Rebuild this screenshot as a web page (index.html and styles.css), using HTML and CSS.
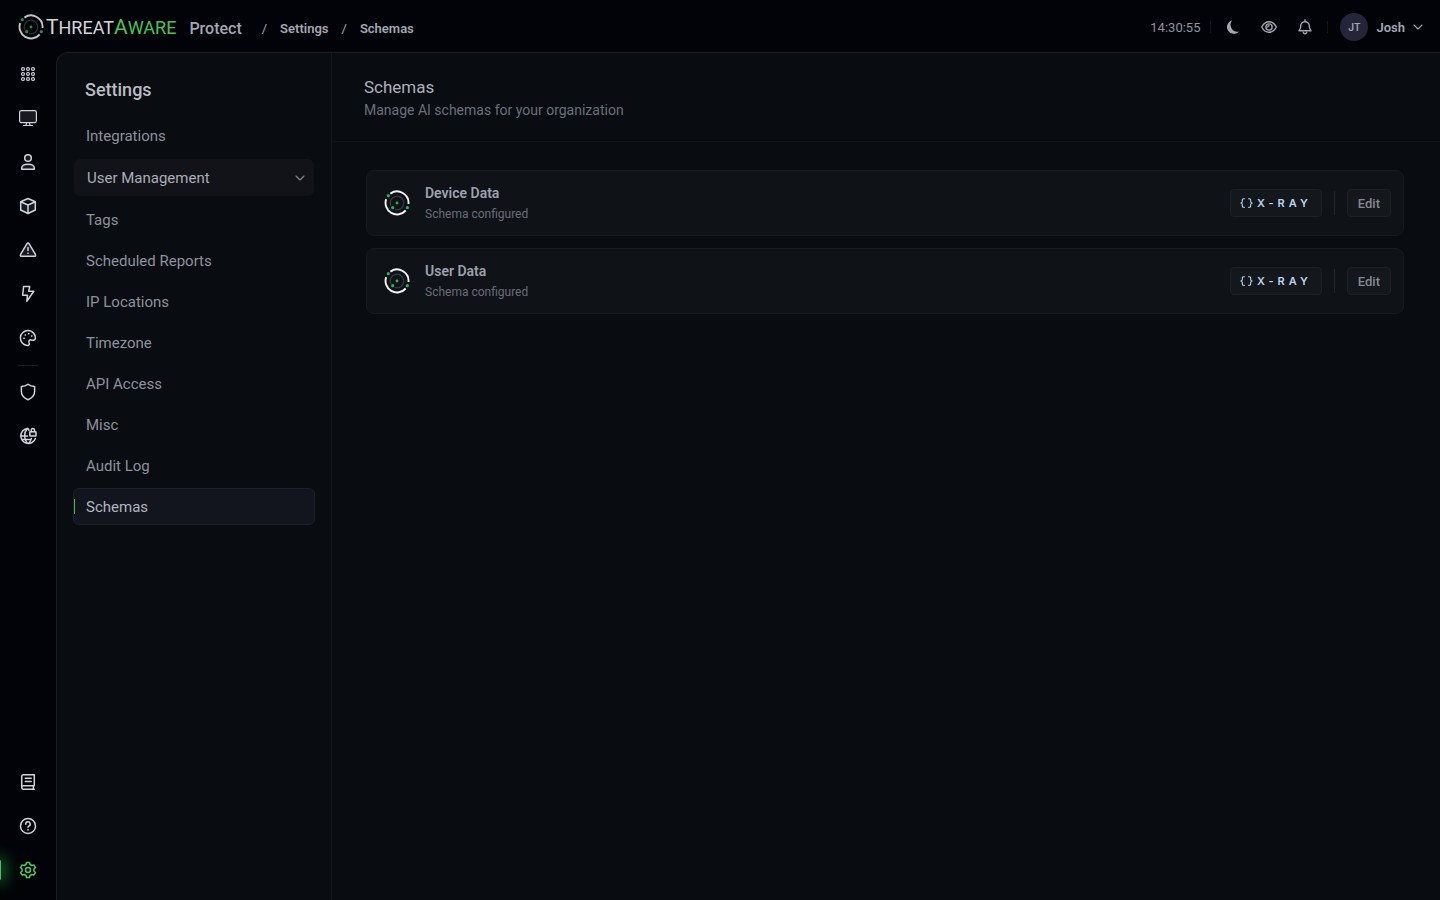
FILE: index.html
```html
<!DOCTYPE html>
<html lang="en">
<head>
<meta charset="utf-8">
<title>Schemas – ThreatAware</title>
<link rel="stylesheet" href="styles.css">
</head>
<body>
<svg class="sprite" aria-hidden="true">
  <symbol id="radar" viewBox="0 0 26 26">
    <g stroke-linecap="butt">
      <path class="ring" d="M6.400 3.600A11.500 11.500 0 0 1 24.500 14M21.700 20.500A11.500 11.500 0 0 1 2.200 9.100" stroke-width="1.900"/>
      <path class="orbit" d="M6.800 15.900A6.800 6.800 0 1 1 10.700 19.400" stroke-width="1.300"/>
    </g>
    <g class="blips"><circle cx="13" cy="13" r="1.400"/><circle cx="4.300" cy="5.700" r="1.600"/><circle cx="8.700" cy="17.700" r="1.600"/><circle cx="23.300" cy="17.700" r="1.600"/></g>
  </symbol>
</svg>
<div class="app">
  <header class="topbar">
    <a class="brand" href="#" aria-label="ThreatAware">
      <svg class="brand-mark" aria-hidden="true"><use href="#radar"/></svg>
      <span class="wordmark"><b>T</b>hreat<span class="accent"><b>A</b>ware</span></span>
    </a>
    <span class="product">Protect</span>
    <nav class="crumbs" aria-label="Breadcrumb">
      <span class="slash">/</span><a href="#">Settings</a><span class="slash">/</span><a href="#">Schemas</a>
    </nav>
    <div class="tools">
      <time class="clock">14:30:55</time>
      <span class="sep"></span>
      <button class="tool" aria-label="Dark mode"><svg viewBox="0 0 16 16"><path class="solid" d="M7.200 1.300A6.900 6.900 0 1 0 14.200 12.400A6.900 6.900 0 0 1 7.200 1.300Z"/></svg></button>
      <button class="tool" aria-label="Visibility"><svg viewBox="0 0 16 16"><path d="M.7 8C2.500 4.500 5 2.700 8 2.700S13.500 4.500 15.300 8C13.500 11.500 11 13.300 8 13.300S2.500 11.500.7 8Z"/><circle cx="8" cy="8" r="3.100"/><path d="M6.700 8A1.400 1.400 0 0 1 8 6.700"/></svg></button>
      <button class="tool" aria-label="Notifications"><svg viewBox="0 0 16 16"><path d="M8 .8V2M3.700 7A4.300 4.300 0 0 1 12.300 7C12.300 9.700 13.200 10.600 14 11.800H2C2.800 10.600 3.700 9.700 3.700 7ZM6.300 13.500A1.800 1.800 0 0 0 9.700 13.500"/></svg></button>
      <span class="sep"></span>
      <button class="account"><span class="avatar">JT</span>Josh<svg class="chev" viewBox="0 0 10 10"><path d="M1 3L5 7L9 3"/></svg></button>
    </div>
  </header>
  <nav class="rail" aria-label="Main">
    <a href="#" aria-label="Apps"><svg viewBox="0 0 18 18" class="dots"><circle cx="4" cy="4" r="1.500"/><circle cx="9" cy="4" r="1.500"/><circle cx="14" cy="4" r="1.500"/><circle cx="4" cy="9" r="1.500"/><circle cx="9" cy="9" r="1.500"/><circle cx="14" cy="9" r="1.500"/><circle cx="4" cy="14" r="1.500"/><circle cx="9" cy="14" r="1.500"/><circle cx="14" cy="14" r="1.500"/></svg></a>
    <a href="#" aria-label="Devices"><svg viewBox="0 0 18 18" class="thin"><rect class="tint" x=".6" y="1.600" width="16.800" height="12" rx="1.800"/><path d="M7.500 13.800L7 16.400M10.500 13.800L11 16.400M4.500 16.500H13.500"/></svg></a>
    <a href="#" aria-label="Users"><svg viewBox="0 0 18 18"><circle class="tint" cx="9" cy="5" r="3.300"/><path class="tint" d="M2.700 16.200V15.200C2.700 12.600 5 11.200 9 11.200S15.300 12.600 15.300 15.200V16.200Z"/></svg></a>
    <a href="#" aria-label="Assets"><svg viewBox="0 0 18 18"><path class="tint" d="M9 1.500L16.300 4.700V13L9 16.500L1.700 13V4.700ZM1.700 4.700L9 8L16.300 4.700M9 8V16.500"/></svg></a>
    <a href="#" aria-label="Alerts"><svg viewBox="0 0 18 18"><path class="tint" d="M7.900 2.900Q9 1.200 10.100 2.900L16.400 13.400Q17.100 15.200 15.300 15.300H2.700Q.9 15.200 1.600 13.400ZM9 6.500V9.600M9 12.200V12.600"/></svg></a>
    <a href="#" aria-label="Automations"><svg viewBox="0 0 18 18"><path d="M4.600 1.600H10.700L9.700 6.200H14.800L7.800 16.200L8.500 10.300H3.600Z"/></svg></a>
    <a href="#" aria-label="Appearance"><svg viewBox="0 0 18 18"><path d="M16.400 9.200A7.500 7.500 0 1 0 8.400 16.500C10.600 16.500 10.500 14.700 10 13.500C9.500 11.800 10.500 10.700 12 10.900C14.500 11.400 16.300 11.200 16.400 9.200Z"/><path class="dabs" d="M4.300 9.300H5.800M5.600 6H7.100M9 4.800H10.500M12 7H13.500"/></svg></a>
    <span class="rule"></span>
    <a href="#" aria-label="Security"><svg viewBox="0 0 18 18"><path d="M9 1.300Q12 3.200 15.600 3.500V9Q15.300 14 9 16.700Q2.700 14 2.400 9V3.500Q6 3.200 9 1.300Z"/></svg></a>
    <a href="#" aria-label="Network"><svg viewBox="0 0 18 18"><path d="M8.500 1.500A7.500 7.500 0 1 0 16.400 11.500M1.500 9H8.500M8.300 1.500C4.600 6 4.600 12 8.600 16.500M9.400 16.500Q12 13.900 12.400 11.500M2.500 12.500H12M9 1.500Q9.800 2.500 10 3.500"/><rect class="tint" x="10.800" y="4.800" width="6.200" height="4.200" rx=".5"/><path d="M12.300 4.500V3A1.600 1.600 0 0 1 15.500 3V4.500"/></svg></a>
    <span class="grow"></span>
    <a href="#" aria-label="Documentation"><svg viewBox="0 0 18 18"><path d="M15.300 12.800V1.700H4.300Q2.700 1.800 2.700 3.400V14.500Q2.800 16.300 4.500 16.300H15.300M15.300 12.800H4.500Q2.700 13 2.700 14.500M14.400 13V16.300M6.300 5.300H12.200M6.300 8.500H12.200"/></svg></a>
    <a href="#" aria-label="Help"><svg viewBox="0 0 18 18"><circle cx="9" cy="9" r="7.500"/><path d="M6.800 7.200A2.200 2.200 0 1 1 9.700 9.100Q9 9.400 9 10.200M9 12.500V12.900"/></svg></a>
    <a href="#" class="active" aria-label="Settings" aria-current="page"><svg viewBox="0 0 18 18"><path d="M7.500 1.400H10.500L11 3.500L12.800 4.500L14.800 3.900L16.400 6.500L14.900 8V10L16.400 11.500L14.800 14.100L12.800 13.500L11 14.500L10.500 16.600H7.500L7 14.500L5.200 13.500L3.200 14.100L1.600 11.500L3.100 10V8L1.600 6.500L3.200 3.900L5.200 4.500L7 3.500Z"/><circle cx="9" cy="9" r="2.500"/></svg></a>
  </nav>
  <div class="panel">
    <aside class="side">
      <h2>Settings</h2>
      <nav class="menu" aria-label="Settings">
        <a href="#">Integrations</a>
        <button class="group">User Management<svg class="chev" viewBox="0 0 10 10"><path d="M1 3L5 7L9 3"/></svg></button>
        <a href="#">Tags</a>
        <a href="#">Scheduled Reports</a>
        <a href="#">IP Locations</a>
        <a href="#">Timezone</a>
        <a href="#">API Access</a>
        <a href="#">Misc</a>
        <a href="#">Audit Log</a>
        <a href="#" class="current" aria-current="page">Schemas</a>
      </nav>
    </aside>
    <main class="content">
      <div class="heading"><h1>Schemas</h1><p>Manage AI schemas for your organization</p></div>
      <div class="cards">
        <section class="card">
          <svg class="card-mark" aria-hidden="true"><use href="#radar"/></svg>
          <div class="about"><h3>Device Data</h3><p>Schema configured</p></div>
          <button class="xray"><svg viewBox="0 0 13 10"><path d="M4.500.7H3.500Q2.300.7 2.300 2V3.500Q2.300 5 .8 5Q2.300 5 2.300 6.500V8Q2.300 9.300 3.500 9.300H4.500M8.500.7H9.500Q10.700.7 10.700 2V3.500Q10.700 5 12.200 5Q10.700 5 10.700 6.500V8Q10.700 9.300 9.500 9.300H8.500"/></svg>X-RAY</button>
          <span class="bar"></span>
          <button class="edit">Edit</button>
        </section>
        <section class="card">
          <svg class="card-mark" aria-hidden="true"><use href="#radar"/></svg>
          <div class="about"><h3>User Data</h3><p>Schema configured</p></div>
          <button class="xray"><svg viewBox="0 0 13 10"><path d="M4.500.7H3.500Q2.300.7 2.300 2V3.500Q2.300 5 .8 5Q2.300 5 2.300 6.500V8Q2.300 9.300 3.500 9.300H4.500M8.500.7H9.500Q10.700.7 10.700 2V3.500Q10.700 5 12.200 5Q10.700 5 10.700 6.500V8Q10.700 9.300 9.500 9.300H8.500"/></svg>X-RAY</button>
          <span class="bar"></span>
          <button class="edit">Edit</button>
        </section>
      </div>
    </main>
  </div>
</div>
</body>
</html>
```

FILE: styles.css
```css
* { box-sizing: border-box; }
body { margin: 0; background: #020308; color: #a3a7b3; font-family: Roboto, "Liberation Sans", sans-serif; font-size: 14px; }
h1, h2, h3, p { margin: 0; }
a { color: inherit; text-decoration: none; }
button { margin: 0; padding: 0; border: 0; background: none; color: inherit; font: inherit; cursor: pointer; }
svg { flex: none; fill: none; stroke: currentColor; stroke-linecap: round; stroke-linejoin: round; }
.sprite { position: absolute; width: 0; height: 0; }

.app { display: grid; grid-template: 52px 1fr / 56px 1fr; min-height: 100vh; }

.topbar { grid-column: 1 / -1; display: flex; align-items: center; padding: 2px 17px 0 18px; }
.brand { display: flex; align-items: center; gap: 2px; }
.brand-mark { width: 26px; height: 26px; opacity: .8; }
.wordmark { font-size: 18px; line-height: 28px; font-weight: 400; text-transform: uppercase; color: #d4d5da; }
.wordmark b { font-size: 21px; font-weight: 400; }
.accent { color: #48c355; }
.ring { stroke: #f2f3f5; }
.orbit { stroke: #343a49; }
.blips { fill: #24b557; stroke: none; }
.product { margin-left: 13px; padding-top: 4px; font-size: 16px; line-height: 20px; font-weight: 500; }
.crumbs { display: flex; gap: 13px; margin-left: 20px; padding-top: 3px; font-size: 13px; line-height: 16px; font-weight: 600; }
.slash { font-weight: 400; }
.tools { display: flex; align-items: center; margin-left: auto; color: #a3a7b3; }
.clock { margin-right: 2px; font-size: 13px; color: #8f94a3; }
.sep { width: 1px; height: 12px; margin: 0 8px; background: #12141c; }
.tool { display: grid; place-items: center; width: 28px; height: 28px; }
.tool + .tool { margin-left: 8px; }
.tool svg { width: 16px; height: 16px; stroke-width: 1.4; }
.solid { fill: currentColor; stroke: none; }
.account { display: flex; align-items: center; gap: 8px; padding-left: 4px; font-size: 13px; font-weight: 600; }
.avatar { display: grid; place-items: center; width: 28px; height: 28px; border-radius: 50%; background: #25253a; font-family: Inter, sans-serif; font-size: 10px; font-weight: 600; }
.chev { width: 10px; height: 10px; stroke-width: 1.1; }

.rail { display: flex; flex-direction: column; padding-bottom: 8px; color: #d2d4dc; }
.rail a { position: relative; display: grid; place-items: center; height: 44px; }
.rail svg { width: 18px; height: 18px; stroke-width: 1.5; }
.rail .thin { stroke-width: 1.2; }
.tint { fill: #181a22; }
.rail .dots { stroke-width: 1.1; fill: #30333d; }
.dabs { stroke-width: 1.5; stroke-linecap: butt; }
.rule { width: 20px; height: 1px; margin: 5px auto 4px; background: #1c1e26; }
.grow { flex: 1; }
.rail .active { color: #4fc763; }
.active::before { content: ""; position: absolute; left: -2px; top: 12px; width: 3px; height: 20px; border-radius: 2px; background: #45c45c; box-shadow: 0 0 16px 3px #248a3a; }

.panel { display: grid; grid-template-columns: 275px 1fr; border: solid #191c22; border-width: 1px 0 0 1px; border-radius: 12px 0 0 0; background: #090c11; }
.side { padding: 24px 16px; border-right: 1px solid #15181e; }
.side h2 { padding: 0 12px 14px; font-size: 18px; line-height: 26px; font-weight: 500; color: #bbbdc3; }
.menu { display: flex; flex-direction: column; gap: 4px; font-size: 15px; line-height: 20px; color: #8d929e; }
.menu a, .group { display: flex; align-items: center; height: 37px; padding: 1px 12px 0; border: 1px solid transparent; border-radius: 6px; }
.group { justify-content: space-between; margin: 1px; padding: 1px 9px 0 13px; border: 0; background: #121318; color: #a9adb8; }
.group .chev { stroke: #858894; }
.menu .current { position: relative; border-color: #1c2029; background: #12151d; color: #b0b4c0; }
.current::before { content: ""; position: absolute; left: 0; top: 10px; width: 1px; height: 15px; background: #3fb853; }

.heading { padding: 22px 32px 20px; border-bottom: 1px solid #101319; }
.heading h1 { font-size: 17px; line-height: 24px; font-weight: 400; color: #adb1bc; }
.heading p { font-size: 14px; line-height: 22px; color: #6b707d; }
.cards { display: flex; flex-direction: column; gap: 12px; padding: 28px 36px 28px 34px; }
.card { display: flex; align-items: center; padding: 11px 12px 11px 17px; border: 1px solid #171a1f; border-radius: 8px; background: #0f1217; }
.card-mark { width: 26px; height: 26px; }
.about { flex: 1; margin-left: 15px; }
.about h3 { font-size: 14px; line-height: 22px; font-weight: 600; color: #9da1af; }
.about p { font-size: 12px; line-height: 20px; color: #686d7a; }
.xray, .edit { display: flex; align-items: center; justify-content: center; height: 28px; padding: 0 10px; border: 1px solid #1d2127; border-radius: 4px; background: #14171c; }
.xray { gap: 4px; padding: 0 9px; color: #b9d5ec; font-family: Inter, sans-serif; font-size: 11px; font-weight: 600; letter-spacing: 4px; }
.xray svg { width: 13px; height: 10px; stroke-width: 1.1; }
.bar { width: 1px; height: 24px; margin: 0 12px; background: #22252b; }
.edit { font-size: 13px; font-weight: 500; color: #858894; }
```
